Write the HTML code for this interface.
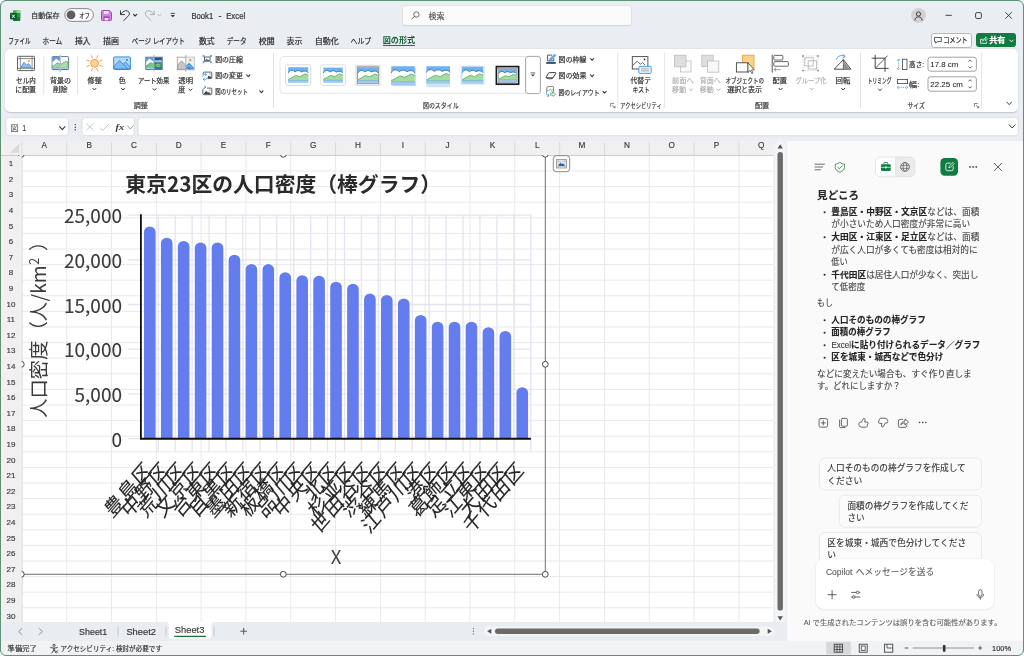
<!DOCTYPE html>
<html lang="ja"><head><meta charset="utf-8"><title>Book1 - Excel</title>
<style>
html,body{margin:0;padding:0}
body{width:1024px;height:656px;position:relative;overflow:hidden;background:#fff;font-family:"Liberation Sans","Noto Sans CJK JP",sans-serif;font-size:8px;color:#242424;line-height:1}
.a{position:absolute;white-space:nowrap}
svg{position:absolute;overflow:visible;will-change:transform}
#win{position:absolute;left:0;top:0;width:1024px;height:656px;border-radius:6px;background:#eaedf1;overflow:hidden}
#winb{position:absolute;left:0;top:0;width:1022px;height:654px;border:1px solid #5d9277;border-radius:6px;pointer-events:none}
#ribbon{left:5.4px;top:49px;width:1013px;height:63px;background:#fff;border-radius:5px;box-shadow:0 0.5px 1.5px rgba(0,0,0,.18)}
.tab{top:36.5px;font-size:7.8px;color:#242424;letter-spacing:-0.3px}
.rl{font-size:7.4px;color:#333;text-align:center;line-height:9.5px;letter-spacing:-0.4px}
.gl{font-size:7.2px;color:#444;letter-spacing:-0.3px}
.dis{color:#b0b0b0}
.sep{width:1px;background:#dcdcdc}
.fbox{background:#fff;border-radius:3px;top:118px;height:18px;box-shadow:0 0 0 .5px #dfe2e6}
#sheet{left:0;top:140px;width:787px;height:482px;background:#fff}
#panel{left:787.4px;top:140.7px;width:237px;height:500px;background:#fafafa}
#tabsbar{left:0;top:622px;width:787px;height:19px;background:#e9ecf0}
#status{left:0;top:641px;width:1024px;height:15px;background:#f1f2f4}
.p{font-size:8.2px;color:#424242;letter-spacing:-0.1px}
.pb{font-weight:700;color:#242424}
.chip{background:#fafafa;border:1px solid #e6e6e6;border-radius:5px;font-size:8.2px;color:#333;line-height:12.5px;padding:3px 7px;white-space:normal;box-sizing:border-box}
</style></head><body>
<div id="win">
<!-- excel icon -->
<svg style="left:10px;top:10px" width="11" height="12" viewBox="0 0 11 12">
<path d="M3 0.3H9.3Q10.3 0.3 10.3 1.3V3.2H3Z" fill="#3fb55a"/>
<path d="M6.6 0.3H9.3Q10.3 0.3 10.3 1.3V3.2H6.6Z" fill="#8edb7c"/>
<path d="M3 3.2H10.3V10Q10.3 11 9.3 11H3Z" fill="#137a3e"/>
<path d="M6.6 3.2H10.3V7H6.6Z" fill="#1e9b52"/>
<rect x="0" y="2.8" width="6.8" height="6.8" rx="1" fill="#0e5c2f"/>
<path d="M2.2 4.7L4.6 7.8M4.6 4.7L2.2 7.8" stroke="#fff" stroke-width="1" fill="none"/>
</svg>
<svg style="left:0;top:0" width="100" height="30" viewBox="0 0 100 30"><rect x="64.8" y="8.6" width="28.6" height="12.7" rx="6.35" fill="#fdfdfd" stroke="#7a7a7a" stroke-width="0.9"/><circle cx="71" cy="14.9" r="4.4" fill="#5e5e5e"/></svg>
<!-- save -->
<svg style="left:101px;top:10px" width="11" height="11" viewBox="0 0 11 11">
<path d="M1.4 0.5H8.5L10.5 2.5V9.4Q10.5 10.5 9.4 10.5H1.4Q0.5 10.5 0.5 9.4V1.4Q0.5 0.5 1.4 0.5Z" fill="#cf86dc" stroke="#a846bc" stroke-width="1"/>
<rect x="2.9" y="1" width="4.6" height="2.9" fill="#fbeefd"/>
<rect x="2.6" y="6.3" width="5.8" height="4" fill="#a846bc"/>
<rect x="3.6" y="8" width="3.8" height="2.3" fill="#fbeefd"/>
</svg>
<!-- undo -->
<svg style="left:0;top:0" width="200" height="30" viewBox="0 0 200 30">
<path d="M120.5 10.9V14.6H124.5" stroke="#333" stroke-width="0.95" fill="none" stroke-linecap="round" stroke-linejoin="round"/>
<path d="M120.8 14.3C122.5 11.6 125 10.2 127.2 10.9C129.5 11.6 130 13.9 128.6 15.7L123.7 20.5" stroke="#333" stroke-width="0.95" fill="none" stroke-linecap="round" stroke-linejoin="round"/>
<path d="M133.5 14.3L135.1 16L136.7 14.3" stroke="#333" stroke-width="1.15" fill="none" stroke-linecap="round" stroke-linejoin="round"/>
<path d="M154.2 10.9V14.6H150.2" stroke="#ababab" stroke-width="0.95" fill="none" stroke-linecap="round" stroke-linejoin="round"/>
<path d="M153.9 14.3C152.2 11.6 149.7 10.2 147.5 10.9C145.2 11.6 144.7 13.9 146.1 15.7L151 20.5" stroke="#ababab" stroke-width="0.95" fill="none" stroke-linecap="round" stroke-linejoin="round"/>
<path d="M157.9 14.3L159.5 16L161.1 14.3" stroke="#bdbdbd" stroke-width="1" fill="none" stroke-linecap="round" stroke-linejoin="round"/>
<path d="M170.7 13.4H174.9" stroke="#3a3a3a" stroke-width="0.9"/><path d="M170.7 14.9H174.9L172.8 17.5Z" fill="#3a3a3a"/>
</svg>
<!-- search -->
<div class="a" style="left:402.5px;top:5.5px;width:228px;height:19.5px;background:#fbfbfb;border-radius:3px;box-shadow:0 0 0 0.6px #d9dcdf,0 1px 1.2px rgba(0,0,0,.13)"></div>
<svg style="left:411px;top:11px" width="9" height="9" viewBox="0 0 9 9"><circle cx="5.4" cy="3.5" r="2.7" stroke="#555" stroke-width="0.85" fill="none"/><path d="M3.4 5.5L0.7 8.2" stroke="#555" stroke-width="0.9" stroke-linecap="round"/></svg>
<!-- avatar -->
<div class="a" style="left:911.2px;top:8px;width:15.2px;height:15.2px;border-radius:8px;background:#d2d2d2"></div>
<svg style="left:914.3px;top:10.5px" width="9" height="10" viewBox="0 0 9 10"><circle cx="4.5" cy="3" r="2.1" stroke="#333" stroke-width="0.9" fill="none"/><path d="M0.9 9.2C1.2 6.6 2.6 5.9 4.5 5.9C6.4 5.9 7.8 6.6 8.1 9.2" stroke="#333" stroke-width="0.9" fill="none" stroke-linecap="round"/></svg>
<!-- window controls -->
<svg style="left:945px;top:12px" width="70" height="8" viewBox="0 0 70 8">
<path d="M0.5 3.3H6.8" stroke="#333" stroke-width="0.9"/>
<rect x="30.6" y="0.6" width="5.8" height="5.9" rx="1.3" stroke="#333" stroke-width="0.9" fill="none"/>
<path d="M60.3 0.2L66.8 6.7M66.8 0.2L60.3 6.7" stroke="#333" stroke-width="0.9"/>
</svg>

<div class="a" style="left:382.9px;top:45.1px;width:32.4px;height:1.25px;background:#1e7145;border-radius:1px"></div>
<!-- comment button -->
<div class="a" style="left:930.8px;top:33px;width:39.4px;height:13.4px;background:#fff;border:0.8px solid #b8b8b8;border-radius:3px"></div>
<svg style="left:934.3px;top:36.5px" width="8" height="7" viewBox="0 0 8 7"><path d="M0.5 0.5H7.3V4.6H3L1.7 6.2V4.6H0.5Z" stroke="#333" stroke-width="0.8" fill="none" stroke-linejoin="round"/></svg>
<!-- share button -->
<div class="a" style="left:976.3px;top:32.8px;width:39.6px;height:14.4px;background:#107c41;border-radius:3px"></div>
<svg style="left:979.5px;top:36px" width="8" height="8" viewBox="0 0 8 8"><path d="M2.8 3.2H0.6V7.3H6.6V5.6" stroke="#fff" stroke-width="0.8" fill="none"/><path d="M2.6 5.4C2.8 3.4 4 2.4 5.6 2.4V0.9L7.6 2.9L5.6 4.9V3.6C4.3 3.6 3.3 4.2 2.6 5.4Z" stroke="#fff" stroke-width="0.7" fill="none" stroke-linejoin="round"/></svg>
<svg style="left:1008.8px;top:38.6px" width="5" height="4" viewBox="0 0 5 4"><path d="M0.6 0.8L2.5 2.8L4.4 0.8" stroke="#fff" stroke-width="0.9" fill="none"/></svg>

<svg width="1024" height="50" viewBox="0 0 1024 50" style="left:0px;top:0px" font-family="Liberation Sans, Noto Sans CJK JP, sans-serif">
<text x="31.10" y="17.63" font-size="7.3" fill="#333" stroke="#333" stroke-width="0.2" textLength="28.50" lengthAdjust="spacingAndGlyphs">自動保存</text>
<text x="79.20" y="17.69" font-size="7.2" fill="#333" stroke="#333" stroke-width="0.2" textLength="10.80" lengthAdjust="spacingAndGlyphs">オフ</text>
<text x="191.40" y="18.75" font-size="8.6" fill="#333" stroke="#333" stroke-width="0.2" textLength="21.80" lengthAdjust="spacingAndGlyphs">Book1</text>
<text x="218.60" y="18.75" font-size="8.6" fill="#333" stroke="#333" stroke-width="0.2" textLength="3.00" lengthAdjust="spacingAndGlyphs">-</text>
<text x="226.20" y="18.75" font-size="8.6" fill="#333" stroke="#333" stroke-width="0.2" textLength="19.00" lengthAdjust="spacingAndGlyphs">Excel</text>
<text x="428.60" y="18.51" font-size="7.8" fill="#5a5a5a" stroke="#5a5a5a" stroke-width="0.2" textLength="16.00" lengthAdjust="spacingAndGlyphs">検索</text>
<text x="8.30" y="43.51" font-size="7.8" fill="#2a2a2a" stroke="#2a2a2a" stroke-width="0.2" textLength="22.20" lengthAdjust="spacingAndGlyphs">ファイル</text>
<text x="42.50" y="43.51" font-size="7.8" fill="#2a2a2a" stroke="#2a2a2a" stroke-width="0.2" textLength="19.70" lengthAdjust="spacingAndGlyphs">ホーム</text>
<text x="74.90" y="43.51" font-size="7.8" fill="#2a2a2a" stroke="#2a2a2a" stroke-width="0.2" textLength="15.50" lengthAdjust="spacingAndGlyphs">挿入</text>
<text x="103.00" y="43.51" font-size="7.8" fill="#2a2a2a" stroke="#2a2a2a" stroke-width="0.2" textLength="15.90" lengthAdjust="spacingAndGlyphs">描画</text>
<text x="131.70" y="43.51" font-size="7.8" fill="#2a2a2a" stroke="#2a2a2a" stroke-width="0.2" textLength="53.20" lengthAdjust="spacingAndGlyphs">ページ レイアウト</text>
<text x="198.90" y="43.51" font-size="7.8" fill="#2a2a2a" stroke="#2a2a2a" stroke-width="0.2" textLength="15.70" lengthAdjust="spacingAndGlyphs">数式</text>
<text x="226.80" y="43.51" font-size="7.8" fill="#2a2a2a" stroke="#2a2a2a" stroke-width="0.2" textLength="19.70" lengthAdjust="spacingAndGlyphs">データ</text>
<text x="258.80" y="43.51" font-size="7.8" fill="#2a2a2a" stroke="#2a2a2a" stroke-width="0.2" textLength="15.80" lengthAdjust="spacingAndGlyphs">校閲</text>
<text x="286.60" y="43.51" font-size="7.8" fill="#2a2a2a" stroke="#2a2a2a" stroke-width="0.2" textLength="15.80" lengthAdjust="spacingAndGlyphs">表示</text>
<text x="314.70" y="43.51" font-size="7.8" fill="#2a2a2a" stroke="#2a2a2a" stroke-width="0.2" textLength="24.10" lengthAdjust="spacingAndGlyphs">自動化</text>
<text x="350.50" y="43.51" font-size="7.8" fill="#2a2a2a" stroke="#2a2a2a" stroke-width="0.2" textLength="20.80" lengthAdjust="spacingAndGlyphs">ヘルプ</text>
<text x="382.70" y="43.27" font-size="7.7" fill="#185c37" font-weight="700" textLength="32.50" lengthAdjust="spacingAndGlyphs">図の形式</text>
<text x="943.50" y="42.64" font-size="7.6" fill="#222" stroke="#222" stroke-width="0.2" textLength="24.10" lengthAdjust="spacingAndGlyphs">コメント</text>
<text x="989.20" y="42.74" font-size="7.9" fill="#fff" font-weight="700" stroke="#fff" stroke-width="0.2" textLength="16.30" lengthAdjust="spacingAndGlyphs">共有</text>
</svg>

<div id="ribbon" class="a">

</div>
<svg width="1024" height="140" viewBox="0 0 1024 140" style="left:0px;top:0px" font-family="Liberation Sans, Noto Sans CJK JP, sans-serif">
<rect x="17.5" y="56.3" width="17" height="14.3" rx="0.8" fill="#fff" stroke="#575757" stroke-width="0.95"/>
<path d="M20.3 56.3V70.6M32.1 56.3V70.6M17.5 58.6H34.5M17.5 68.4H34.5" stroke="#6a6a6a" stroke-width="0.75" fill="none"/>
<path d="M21 67.4L24 62.3L26.6 65.2L28.6 63.6L31.3 67.4Z" fill="#8cc6f7" stroke="#2f7fd6" stroke-width="0.75" stroke-linejoin="round"/>
<rect x="27.9" y="60.2" width="1.9" height="1.5" fill="#f28c28"/>
<text x="16.10" y="83.06" font-size="7.4" fill="#333" stroke="#333" stroke-width="0.22" textLength="19.70" lengthAdjust="spacingAndGlyphs">セル内</text>
<text x="15.30" y="91.86" font-size="7.4" fill="#333" stroke="#333" stroke-width="0.22" textLength="20.50" lengthAdjust="spacingAndGlyphs">に配置</text>
<path d="M43.80 56.00V94.50" stroke="#e3e3e3" stroke-width="1"/>
<rect x="52.1" y="56.6" width="16.5" height="13" rx="0.8" fill="#fff" stroke="#5d7288" stroke-width="0.95"/>
<rect x="52.6" y="57.1" width="7.6" height="12" fill="#4b97e4"/>
<path d="M52.6 62.2L56 58.4L60.2 61.6V66H52.6Z" fill="#fff"/>
<path d="M52.6 66.4L57.2 63L60.2 63.8V67.6H52.6Z" fill="#9ad79a" stroke="#3d9a4f" stroke-width="0.6"/>
<path d="M60.4 64.6L65.6 61.4L68.1 62V67.6H60.4Z" fill="#a9dfa6" stroke="#3d9a4f" stroke-width="0.6"/>
<path d="M52.6 67.5H68.1V69.1H52.6Z" fill="#b9dcf5"/>
<path d="M52.6 69.3H68.1" stroke="#2f6fb0" stroke-width="0.7"/>
<path d="M60.3 54.8V72" stroke="#b9c2c9" stroke-width="1.4"/>
<text x="49.90" y="83.06" font-size="7.4" fill="#333" stroke="#333" stroke-width="0.22" textLength="21.20" lengthAdjust="spacingAndGlyphs">背景の</text>
<text x="53.00" y="91.86" font-size="7.4" fill="#333" stroke="#333" stroke-width="0.22" textLength="14.70" lengthAdjust="spacingAndGlyphs">削除</text>
<path d="M77.70 56.00V94.50" stroke="#e3e3e3" stroke-width="1"/>
<path d="M99.87 65.48L102.27 66.48M96.78 68.57L97.78 70.97M92.42 68.57L91.42 70.97M89.33 65.48L86.93 66.48M89.33 61.12L86.93 60.12M92.42 58.03L91.42 55.63M96.78 58.03L97.78 55.63M99.87 61.12L102.27 60.12" stroke="#f39a4a" stroke-width="1" stroke-linecap="round"/>
<circle cx="94.6" cy="63.3" r="3.9" fill="#fcd68f" stroke="#f0913c" stroke-width="0.9"/>
<text x="87.50" y="83.06" font-size="7.4" fill="#333" stroke="#333" stroke-width="0.22" textLength="14.40" lengthAdjust="spacingAndGlyphs">修整</text>
<path d="M92.90 88.38L94.40 90.03L95.90 88.38" stroke="#333" stroke-width="1" fill="none" stroke-linecap="round" stroke-linejoin="round"/>
<rect x="113.6" y="56.9" width="17" height="12.6" rx="1" fill="#b5d9fa" stroke="#3a8be0" stroke-width="0.95"/>
<path d="M114.1 66.2L119.6 60.6L123.2 64.2L125.6 62.2L130.1 66.6V69H114.1Z" fill="#7ebcf4" stroke="#2f7fd6" stroke-width="0.8" stroke-linejoin="round"/>
<path d="M123.2 64.2L127.6 68.8" stroke="#2f7fd6" stroke-width="0.7"/>
<circle cx="126.9" cy="59.9" r="0.95" fill="#2b6fc0"/>
<text x="118.70" y="83.06" font-size="7.4" fill="#333" stroke="#333" stroke-width="0.22" textLength="7.10" lengthAdjust="spacingAndGlyphs">色</text>
<path d="M121.50 88.38L123.00 90.03L124.50 88.38" stroke="#333" stroke-width="1" fill="none" stroke-linecap="round" stroke-linejoin="round"/>
<rect x="145.8" y="57.2" width="16.4" height="12.2" fill="#fff" stroke="#4d6178" stroke-width="0.9"/>
<rect x="146.2" y="57.6" width="7.4" height="11.4" fill="#4b97e4"/>
<path d="M146.2 62L149.4 58.6L153.6 61.4V65.5H146.2Z" fill="#fff"/>
<path d="M146.2 66L150.4 62.8L153.6 63.8V67.4H146.2Z" fill="#7cc87a" stroke="#3d9a4f" stroke-width="0.6"/>
<rect x="154.2" y="57.6" width="7.6" height="11.4" fill="#1f4f8f"/>
<path d="M154.2 61.4C155.4 59.6 157 59.6 158 60.6C159.2 59.4 160.6 59.6 161.8 60.6V62.4H154.2Z" fill="#9fc3ea"/>
<path d="M154.2 64.8L158.4 62.2L161.8 63V67.4H154.2Z" fill="#3fa45a"/>
<path d="M156 65.4C157 64.2 159 64.2 160 65.2M156.6 66.6H160" stroke="#c9efd0" stroke-width="0.55" fill="none"/>
<path d="M146.2 67.4H153.6V69H146.2Z" fill="#a9d3f3"/>
<path d="M154.2 67.4H161.8V69H154.2Z" fill="#2f6fb6"/>
<path d="M153.9 55V71.5" stroke="#a9b1b8" stroke-width="1.1"/>
<text x="138.00" y="83.06" font-size="7.4" fill="#333" stroke="#333" stroke-width="0.22" textLength="31.30" lengthAdjust="spacingAndGlyphs">アート効果</text>
<path d="M153.10 88.67L154.60 90.33L156.10 88.67" stroke="#333" stroke-width="1" fill="none" stroke-linecap="round" stroke-linejoin="round"/>
<rect x="177.3" y="57.2" width="16.8" height="12.6" fill="#fff" stroke="#999" stroke-width="0.8"/>
<path d="M177.7 65L181.5 60.8L185.5 64.8V69.4H177.7Z" fill="#c6c6c6" stroke="#8e8e8e" stroke-width="0.7"/>
<rect x="186.2" y="57.6" width="7.5" height="11.8" fill="#e8f2fc"/>
<path d="M186.2 65.5L189 62.8L193.7 67.5V69.4H186.2Z" fill="#3f8fe0"/>
<path d="M187 67.2L189 65.2L192 68.2" stroke="#bfe0fb" stroke-width="0.7" fill="none"/>
<circle cx="190.3" cy="60.2" r="1.1" fill="#f28c28"/>
<path d="M185.8 55V71.8" stroke="#b0b0b0" stroke-width="1"/>
<text x="178.30" y="83.06" font-size="7.4" fill="#333" stroke="#333" stroke-width="0.22" textLength="14.70" lengthAdjust="spacingAndGlyphs">透明</text>
<text x="178.30" y="92.36" font-size="7.4" fill="#333" stroke="#333" stroke-width="0.22" textLength="7.10" lengthAdjust="spacingAndGlyphs">度</text>
<path d="M188.90 88.97L190.40 90.62L191.90 88.97" stroke="#333" stroke-width="1" fill="none" stroke-linecap="round" stroke-linejoin="round"/>
<rect x="204.4" y="57" width="5.6" height="4.2" fill="#fff" stroke="#444" stroke-width="0.8"/>
<path d="M204.8 60.8L206.6 58.8L208 60.2L208.8 59.6L209.6 60.8Z" fill="#444"/>
<path d="M202.7 55.1L204 56.4M204 55.3V56.4H202.9M211.9 55.1L210.6 56.4M210.6 55.3V56.4H211.7M202.7 63.1L204 61.8M204 62.9V61.8H202.9M211.9 63.1L210.6 61.8M210.6 62.9V61.8H211.7" stroke="#3a8be0" stroke-width="0.75" fill="none" stroke-linecap="round" stroke-linejoin="round"/>
<text x="215.20" y="62.26" font-size="7.4" fill="#333" stroke="#333" stroke-width="0.22" textLength="27.60" lengthAdjust="spacingAndGlyphs">図の圧縮</text>
<rect x="203.2" y="72.1" width="8.6" height="6.5" rx="1" fill="#fff" stroke="#444" stroke-width="0.85"/>
<path d="M206.6 78.2L208.8 75.4L210 76.8L210.6 76.3L211.4 77.4V78.2Z" fill="#444"/>
<circle cx="210" cy="74" r="0.6" fill="#444"/>
<circle cx="204.8" cy="77" r="3.1" fill="#fff"/>
<path d="M202.4 76.2C202.9 74.6 204.6 73.8 206.2 74.5M207.2 77.8C206.7 79.4 205 80.2 203.4 79.5" stroke="#3a8be0" stroke-width="0.75" fill="none" stroke-linecap="round" stroke-linejoin="round"/>
<path d="M205.2 73.4L206.5 74.6L205.1 75.7M204.4 80.6L203.1 79.4L204.5 78.3" stroke="#3a8be0" stroke-width="0.75" fill="none" stroke-linecap="round" stroke-linejoin="round"/>
<text x="215.20" y="78.36" font-size="7.4" fill="#333" stroke="#333" stroke-width="0.22" textLength="27.60" lengthAdjust="spacingAndGlyphs">図の変更</text>
<path d="M246.70 74.82L248.30 76.58L249.90 74.82" stroke="#333" stroke-width="1.05" fill="none" stroke-linecap="round" stroke-linejoin="round"/>
<rect x="202.8" y="88.1" width="9" height="6.6" rx="1" fill="#fff" stroke="#444" stroke-width="0.85"/>
<path d="M203.4 94.2L206.2 90.8L208 92.8L209 92L211.2 94.2Z" fill="#444"/>
<circle cx="209.8" cy="90" r="0.6" fill="#444"/>
<rect x="201.8" y="85.6" width="5.2" height="4.4" fill="#fff"/>
<path d="M203 90.4C202.6 88.6 203.6 87.2 205.6 87.2" stroke="#3a8be0" stroke-width="0.75" fill="none" stroke-linecap="round" stroke-linejoin="round"/>
<path d="M204.6 85.9L206 87.2L204.6 88.5" stroke="#3a8be0" stroke-width="0.75" fill="none" stroke-linecap="round" stroke-linejoin="round"/>
<text x="215.20" y="94.16" font-size="7.4" fill="#333" stroke="#333" stroke-width="0.22" textLength="32.70" lengthAdjust="spacingAndGlyphs">図のリセット</text>
<path d="M259.80 90.82L261.40 92.58L263.00 90.82" stroke="#333" stroke-width="1.05" fill="none" stroke-linecap="round" stroke-linejoin="round"/>
<text x="133.70" y="108.19" font-size="7.2" fill="#444" stroke="#444" stroke-width="0.22" textLength="14.20" lengthAdjust="spacingAndGlyphs">調整</text>
<path d="M273.50 52.50V108.00" stroke="#e3e3e3" stroke-width="1"/>

<path d="M525.5 56.5H283.5Q280 56.5 280 60V89.8Q280 93.3 283.5 93.3H525.5" fill="#fff" stroke="#e2e2e2" stroke-width="0.9"/>
<rect x="285.6" y="64.8" width="25.2" height="20.6" rx="1.8" fill="#fff" stroke="#d0d0d0" stroke-width="0.8"/>
<rect x="288.20" y="67.20" width="20.00" height="15.80" fill="#6fb2f0"/><path d="M288.20 72.89C289.40 69.73 293.00 69.41 295.00 71.94C297.00 70.04 299.80 70.04 301.40 71.94C303.80 70.36 307.00 70.68 308.20 72.89V80.63H288.20Z" fill="#fff"/><path d="M288.20 72.89C289.40 69.73 293.00 69.41 295.00 71.94C297.00 70.04 299.80 70.04 301.40 71.94C303.80 70.36 307.00 70.68 308.20 72.89" fill="none" stroke="#1f5fb0" stroke-width="0.8"/><path d="M288.20 79.52L295.80 75.42L299.80 76.68L305.00 73.84L308.20 75.10V80.79H288.20Z" fill="#a6dca2"/><path d="M288.20 79.52L295.80 75.42L299.80 76.68L305.00 73.84L308.20 75.10" fill="none" stroke="#3d9a4f" stroke-width="0.65"/><rect x="288.20" y="80.47" width="20.00" height="2.53" fill="#a5cdf1"/><path d="M288.20 80.47H308.20" stroke="#5f9fd8" stroke-width="0.5"/>
<rect x="320.6" y="64.8" width="25" height="20.6" rx="1.8" fill="#fff" stroke="#d9d9d9" stroke-width="0.8"/>
<rect x="323.40" y="67.60" width="19.40" height="15.00" fill="#6fb2f0"/><path d="M323.40 73.00C324.56 70.00 328.06 69.70 330.00 72.10C331.94 70.30 334.65 70.30 336.20 72.10C338.53 70.60 341.64 70.90 342.80 73.00V80.35H323.40Z" fill="#fff"/><path d="M323.40 73.00C324.56 70.00 328.06 69.70 330.00 72.10C331.94 70.30 334.65 70.30 336.20 72.10C338.53 70.60 341.64 70.90 342.80 73.00" fill="none" stroke="#1f5fb0" stroke-width="0.8"/><path d="M323.40 79.30L330.77 75.40L334.65 76.60L339.70 73.90L342.80 75.10V80.50H323.40Z" fill="#a6dca2"/><path d="M323.40 79.30L330.77 75.40L334.65 76.60L339.70 73.90L342.80 75.10" fill="none" stroke="#3d9a4f" stroke-width="0.65"/><rect x="323.40" y="80.20" width="19.40" height="2.40" fill="#a5cdf1"/><path d="M323.40 80.20H342.80" stroke="#5f9fd8" stroke-width="0.5"/>
<rect x="356" y="65.2" width="24" height="20" fill="#f1f1f1" stroke="#d2d2d2" stroke-width="0.8"/>
<rect x="357.6" y="66.8" width="20.8" height="16.8" fill="none" stroke="#8a8a8a" stroke-width="0.8"/>
<rect x="358.00" y="67.20" width="20.00" height="16.00" fill="#6fb2f0"/><path d="M358.00 72.96C359.20 69.76 362.80 69.44 364.80 72.00C366.80 70.08 369.60 70.08 371.20 72.00C373.60 70.40 376.80 70.72 378.00 72.96V80.80H358.00Z" fill="#fff"/><path d="M358.00 72.96C359.20 69.76 362.80 69.44 364.80 72.00C366.80 70.08 369.60 70.08 371.20 72.00C373.60 70.40 376.80 70.72 378.00 72.96" fill="none" stroke="#1f5fb0" stroke-width="0.8"/><path d="M358.00 79.68L365.60 75.52L369.60 76.80L374.80 73.92L378.00 75.20V80.96H358.00Z" fill="#a6dca2"/><path d="M358.00 79.68L365.60 75.52L369.60 76.80L374.80 73.92L378.00 75.20" fill="none" stroke="#3d9a4f" stroke-width="0.65"/><rect x="358.00" y="80.64" width="20.00" height="2.56" fill="#a5cdf1"/><path d="M358.00 80.64H378.00" stroke="#5f9fd8" stroke-width="0.5"/>
<rect x="392.2" y="67.6" width="23.6" height="18.4" fill="#c8c8c8" opacity="0.8"/>
<rect x="391.20" y="66.20" width="23.60" height="18.60" fill="#6fb2f0"/><path d="M391.20 72.90C392.62 69.18 396.86 68.80 399.22 71.78C401.58 69.55 404.89 69.55 406.78 71.78C409.61 69.92 413.38 70.29 414.80 72.90V82.01H391.20Z" fill="#fff"/><path d="M391.20 72.90C392.62 69.18 396.86 68.80 399.22 71.78C401.58 69.55 404.89 69.55 406.78 71.78C409.61 69.92 413.38 70.29 414.80 72.90" fill="none" stroke="#1f5fb0" stroke-width="0.8"/><path d="M391.20 80.71L400.17 75.87L404.89 77.36L411.02 74.01L414.80 75.50V82.20H391.20Z" fill="#a6dca2"/><path d="M391.20 80.71L400.17 75.87L404.89 77.36L411.02 74.01L414.80 75.50" fill="none" stroke="#3d9a4f" stroke-width="0.65"/><rect x="391.20" y="81.82" width="23.60" height="2.98" fill="#a5cdf1"/><path d="M391.20 81.82H414.80" stroke="#5f9fd8" stroke-width="0.5"/>
<rect x="426.40" y="66.20" width="23.60" height="17.40" fill="#6fb2f0"/><path d="M426.40 72.46C427.82 68.98 432.06 68.64 434.42 71.42C436.78 69.33 440.09 69.33 441.98 71.42C444.81 69.68 448.58 70.03 450.00 72.46V80.99H426.40Z" fill="#fff"/><path d="M426.40 72.46C427.82 68.98 432.06 68.64 434.42 71.42C436.78 69.33 440.09 69.33 441.98 71.42C444.81 69.68 448.58 70.03 450.00 72.46" fill="none" stroke="#1f5fb0" stroke-width="0.8"/><path d="M426.40 79.77L435.37 75.25L440.09 76.64L446.22 73.51L450.00 74.90V81.16H426.40Z" fill="#a6dca2"/><path d="M426.40 79.77L435.37 75.25L440.09 76.64L446.22 73.51L450.00 74.90" fill="none" stroke="#3d9a4f" stroke-width="0.65"/><rect x="426.40" y="80.82" width="23.60" height="2.78" fill="#a5cdf1"/><path d="M426.40 80.82H450.00" stroke="#5f9fd8" stroke-width="0.5"/>
<rect x="426.4" y="83.6" width="23.6" height="3.6" fill="#b9d8f4" opacity="0.7"/>
<rect x="460.6" y="65.6" width="24" height="19" fill="#cfe4f8"/>
<rect x="462.20" y="66.80" width="20.80" height="16.40" fill="#6fb2f0"/><path d="M462.20 72.70C463.45 69.42 467.19 69.10 469.27 71.72C471.35 69.75 474.26 69.75 475.93 71.72C478.42 70.08 481.75 70.41 483.00 72.70V80.74H462.20Z" fill="#fff"/><path d="M462.20 72.70C463.45 69.42 467.19 69.10 469.27 71.72C471.35 69.75 474.26 69.75 475.93 71.72C478.42 70.08 481.75 70.41 483.00 72.70" fill="none" stroke="#1f5fb0" stroke-width="0.8"/><path d="M462.20 79.59L470.10 75.33L474.26 76.64L479.67 73.69L483.00 75.00V80.90H462.20Z" fill="#a6dca2"/><path d="M462.20 79.59L470.10 75.33L474.26 76.64L479.67 73.69L483.00 75.00" fill="none" stroke="#3d9a4f" stroke-width="0.65"/><rect x="462.20" y="80.58" width="20.80" height="2.62" fill="#a5cdf1"/><path d="M462.20 80.58H483.00" stroke="#5f9fd8" stroke-width="0.5"/>
<rect x="496.4" y="66.6" width="22.2" height="17.6" fill="#fff" stroke="#1a1a1a" stroke-width="1.7"/>
<rect x="498.4" y="68.5" width="18.2" height="13.8" fill="none" stroke="#555" stroke-width="0.5"/>
<rect x="498.80" y="68.90" width="17.40" height="13.00" fill="#6fb2f0"/><path d="M498.80 73.58C499.84 70.98 502.98 70.72 504.72 72.80C506.46 71.24 508.89 71.24 510.28 72.80C512.37 71.50 515.16 71.76 516.20 73.58V79.95H498.80Z" fill="#fff"/><path d="M498.80 73.58C499.84 70.98 502.98 70.72 504.72 72.80C506.46 71.24 508.89 71.24 510.28 72.80C512.37 71.50 515.16 71.76 516.20 73.58" fill="none" stroke="#1f5fb0" stroke-width="0.8"/><path d="M498.80 79.04L505.41 75.66L508.89 76.70L513.42 74.36L516.20 75.40V80.08H498.80Z" fill="#a6dca2"/><path d="M498.80 79.04L505.41 75.66L508.89 76.70L513.42 74.36L516.20 75.40" fill="none" stroke="#3d9a4f" stroke-width="0.65"/><rect x="498.80" y="79.82" width="17.40" height="2.08" fill="#a5cdf1"/><path d="M498.80 79.82H516.20" stroke="#5f9fd8" stroke-width="0.5"/>
<rect x="525.6" y="56.4" width="14.8" height="37.2" rx="2.6" fill="#fff" stroke="#9a9a9a" stroke-width="0.9"/>
<path d="M530.6 72.9H535.2" stroke="#444" stroke-width="0.8"/><path d="M530.8 74.4L532.9 76.6L535 74.4Z" fill="#444"/>
<path d="M552 55.1H547.6V60.9H553.8V58.6" fill="none" stroke="#444" stroke-width="0.9"/>
<path d="M549.6 60.3L550.3 58.2L554.6 54.2L555.9 55.5L551.7 59.7Z" fill="#6db3f2" stroke="#2f7fd6" stroke-width="0.7" stroke-linejoin="round"/>
<rect x="546.2" y="62.1" width="9.6" height="1.7" fill="#17406d"/>
<text x="558.50" y="61.96" font-size="7.4" fill="#333" stroke="#333" stroke-width="0.22" textLength="27.90" lengthAdjust="spacingAndGlyphs">図の枠線</text>
<path d="M590.50 58.52L592.10 60.28L593.70 58.52" stroke="#333" stroke-width="1.05" fill="none" stroke-linecap="round" stroke-linejoin="round"/>
<path d="M549.4 72.6H555.4Q556.2 72.6 555.8 73.4L553.4 77.2Q553 77.8 552.2 77.8H546.8Q545.8 77.8 546.4 76.8L548.4 73.2Q548.8 72.6 549.4 72.6Z" fill="#fff" stroke="#333" stroke-width="0.95" stroke-linejoin="round"/>
<path d="M546.2 77.2C546.4 79.2 552.4 79.4 553.4 77.4" stroke="#333" stroke-width="0.95" fill="none"/>
<text x="558.50" y="78.16" font-size="7.4" fill="#333" stroke="#333" stroke-width="0.22" textLength="27.90" lengthAdjust="spacingAndGlyphs">図の効果</text>
<path d="M590.50 74.82L592.10 76.58L593.70 74.82" stroke="#333" stroke-width="1.05" fill="none" stroke-linecap="round" stroke-linejoin="round"/>
<rect x="546.9" y="86.6" width="6.6" height="5.4" rx="0.6" fill="#fff" stroke="#666" stroke-width="0.8"/>
<path d="M548 91.4L550.2 88.8L551.6 90.4L552.6 89.6" stroke="#666" stroke-width="0.6" fill="none"/>
<circle cx="549.4" cy="93.4" r="2.6" fill="#fff"/>
<path d="M547.2 90.6C545.6 92.4 546.2 95 548.6 95.8" stroke="#3a8be0" stroke-width="0.85" fill="none" stroke-linecap="round"/>
<path d="M547.4 96.4L549 95.9L548.3 94.4" stroke="#3a8be0" stroke-width="0.75" fill="none" stroke-linecap="round" stroke-linejoin="round"/>
<path d="M550.6 93.2H553.2V92L555.8 94.2L553.2 96.4V95.2H550.6Z" fill="#fff" stroke="#3d9a4f" stroke-width="0.7" stroke-linejoin="round"/>
<text x="558.50" y="94.66" font-size="7.4" fill="#333" stroke="#333" stroke-width="0.22" textLength="41.10" lengthAdjust="spacingAndGlyphs">図のレイアウト</text>
<path d="M602.90 91.32L604.50 93.08L606.10 91.32" stroke="#333" stroke-width="1.05" fill="none" stroke-linecap="round" stroke-linejoin="round"/>
<text x="423.00" y="108.19" font-size="7.2" fill="#444" stroke="#444" stroke-width="0.22" textLength="35.60" lengthAdjust="spacingAndGlyphs">図のスタイル</text>
<path d="M610.70 106.80V103.40H614.10" stroke="#555" stroke-width="0.7" fill="none"/><path d="M612.30 105.00L614.90 107.60M613.20 107.70H615.00V105.90" stroke="#555" stroke-width="0.7" fill="none"/>
<path d="M617.80 52.50V108.00" stroke="#e3e3e3" stroke-width="1"/>
<rect x="632.3" y="56.6" width="15.6" height="12.4" fill="#fff" stroke="#444" stroke-width="0.9"/>
<path d="M632.7 65.4L637.2 61.2L640.4 64.2L642.4 62.6L645 65" stroke="#444" stroke-width="0.8" fill="none"/>
<circle cx="644.6" cy="59.4" r="0.9" fill="#333"/>
<rect x="638.8" y="66.4" width="12.4" height="7" rx="1" fill="#eaf4fd" stroke="#3f8fe0" stroke-width="0.9"/>
<path d="M641 68.9H649M641 70.9H649" stroke="#888" stroke-width="0.7"/>
<text x="630.50" y="83.46" font-size="7.4" fill="#333" stroke="#333" stroke-width="0.22" textLength="20.50" lengthAdjust="spacingAndGlyphs">代替テ</text>
<text x="632.50" y="92.46" font-size="7.4" fill="#333" stroke="#333" stroke-width="0.22" textLength="17.50" lengthAdjust="spacingAndGlyphs">キスト</text>
<text x="620.20" y="108.19" font-size="7.2" fill="#444" stroke="#444" stroke-width="0.22" textLength="41.60" lengthAdjust="spacingAndGlyphs">アクセシビリティ</text>
<path d="M664.70 52.50V108.00" stroke="#e3e3e3" stroke-width="1"/>
<rect x="680.6" y="61" width="10.4" height="11" fill="#fafafa" stroke="#bdbdbd" stroke-width="0.8"/>
<rect x="674.4" y="55.2" width="11.6" height="11.6" fill="#dedede" stroke="#bdbdbd" stroke-width="0.8"/>
<text x="672.10" y="83.06" font-size="7.4" fill="#b2b2b2" stroke="#b2b2b2" stroke-width="0.22" textLength="21.50" lengthAdjust="spacingAndGlyphs">前面へ</text>
<text x="672.10" y="92.26" font-size="7.4" fill="#b2b2b2" stroke="#b2b2b2" stroke-width="0.22" textLength="14.10" lengthAdjust="spacingAndGlyphs">移動</text>
<path d="M689.50 88.97L691.00 90.62L692.50 88.97" stroke="#b2b2b2" stroke-width="1" fill="none" stroke-linecap="round" stroke-linejoin="round"/>
<rect x="701.8" y="55.2" width="11.4" height="11.4" fill="#dedede" stroke="#bdbdbd" stroke-width="0.8"/>
<rect x="707.6" y="61" width="11.2" height="11.2" fill="#f7f7f7" stroke="#bdbdbd" stroke-width="0.8"/>
<text x="699.80" y="83.06" font-size="7.4" fill="#b2b2b2" stroke="#b2b2b2" stroke-width="0.22" textLength="21.10" lengthAdjust="spacingAndGlyphs">背面へ</text>
<text x="699.80" y="92.26" font-size="7.4" fill="#b2b2b2" stroke="#b2b2b2" stroke-width="0.22" textLength="14.00" lengthAdjust="spacingAndGlyphs">移動</text>
<path d="M717.10 88.97L718.60 90.62L720.10 88.97" stroke="#b2b2b2" stroke-width="1" fill="none" stroke-linecap="round" stroke-linejoin="round"/>
<rect x="742.6" y="55.2" width="11.4" height="13" fill="#fbd28a" stroke="#f0a030" stroke-width="0.9"/>
<rect x="736.4" y="62.8" width="11.6" height="9.2" fill="#fff" stroke="#444" stroke-width="0.9"/>
<path d="M748 63V72.4L750.2 70.4L751.8 73.6L753 73L751.5 69.9H754.4Z" fill="#fff" stroke="#333" stroke-width="0.7" stroke-linejoin="round"/>
<text x="725.60" y="83.06" font-size="7.4" fill="#333" stroke="#333" stroke-width="0.22" textLength="38.30" lengthAdjust="spacingAndGlyphs">オブジェクトの</text>
<text x="727.20" y="92.26" font-size="7.4" fill="#333" stroke="#333" stroke-width="0.22" textLength="34.80" lengthAdjust="spacingAndGlyphs">選択と表示</text>
<path d="M772.2 54.6V72.6" stroke="#444" stroke-width="0.9"/>
<rect x="773.8" y="55.4" width="9" height="4.6" rx="0.8" fill="#fff" stroke="#444" stroke-width="0.8"/>
<rect x="773.8" y="61.6" width="14.6" height="4.6" rx="0.8" fill="#fff" stroke="#444" stroke-width="0.8"/>
<path d="M780.6 69.6H774.4M776.2 67.8L774.2 69.6L776.2 71.4" stroke="#3f8fe0" stroke-width="0.8" fill="none"/>
<text x="772.50" y="83.06" font-size="7.4" fill="#333" stroke="#333" stroke-width="0.22" textLength="14.30" lengthAdjust="spacingAndGlyphs">配置</text>
<path d="M779.00 88.38L780.50 90.03L782.00 88.38" stroke="#333" stroke-width="1" fill="none" stroke-linecap="round" stroke-linejoin="round"/>
<rect x="803" y="56" width="15" height="14.6" fill="none" stroke="#c4c4c4" stroke-width="0.7" stroke-dasharray="1.4 1.2"/>
<rect x="804.8" y="57.8" width="8.4" height="8.2" fill="#fff" stroke="#b5b5b5" stroke-width="0.9"/>
<rect x="808.2" y="60.8" width="8.4" height="8.2" fill="none" stroke="#b5b5b5" stroke-width="0.9"/>
<rect x="802.20" y="55.20" width="1.6" height="1.6" fill="#8a8a8a"/>
<rect x="817.20" y="55.20" width="1.6" height="1.6" fill="#8a8a8a"/>
<rect x="802.20" y="69.80" width="1.6" height="1.6" fill="#8a8a8a"/>
<rect x="817.20" y="69.80" width="1.6" height="1.6" fill="#8a8a8a"/>
<text x="795.50" y="83.06" font-size="7.4" fill="#b2b2b2" stroke="#b2b2b2" stroke-width="0.22" textLength="31.00" lengthAdjust="spacingAndGlyphs">グループ化</text>
<path d="M810.20 88.38L811.70 90.03L813.20 88.38" stroke="#b2b2b2" stroke-width="1" fill="none" stroke-linecap="round" stroke-linejoin="round"/>
<path d="M834.2 69.2H850.8L843.4 59.6Z" fill="#fff" stroke="#333" stroke-width="0.9" stroke-linejoin="round"/>
<path d="M843.4 59.6V69.2" stroke="#333" stroke-width="0.9"/>
<path d="M843.4 60.8L850 69.2H843.4Z" fill="#8f8f8f"/>
<path d="M836.2 59.6C837 56.4 840.6 54.6 844.4 56.2" stroke="#3f8fe0" stroke-width="0.9" fill="none"/><path d="M842.6 54L845.2 56.4L842.4 58.4" stroke="#3f8fe0" stroke-width="0.9" fill="none"/>
<text x="835.50" y="83.06" font-size="7.4" fill="#333" stroke="#333" stroke-width="0.22" textLength="14.80" lengthAdjust="spacingAndGlyphs">回転</text>
<path d="M841.60 88.38L843.10 90.03L844.60 88.38" stroke="#333" stroke-width="1" fill="none" stroke-linecap="round" stroke-linejoin="round"/>
<text x="754.90" y="108.19" font-size="7.2" fill="#444" stroke="#444" stroke-width="0.22" textLength="14.30" lengthAdjust="spacingAndGlyphs">配置</text>
<path d="M860.50 52.50V108.00" stroke="#e3e3e3" stroke-width="1"/>
<path d="M875.2 54.8V68.4H888.6M871.6 58.2H885V71.8" stroke="#333" stroke-width="0.9" fill="none"/>
<path d="M875.6 68L887.6 55.6" stroke="#333" stroke-width="0.8"/>
<text x="867.70" y="83.06" font-size="7.4" fill="#333" stroke="#333" stroke-width="0.22" textLength="23.80" lengthAdjust="spacingAndGlyphs">トリミング</text>
<path d="M878.50 88.97L880.00 90.62L881.50 88.97" stroke="#333" stroke-width="1" fill="none" stroke-linecap="round" stroke-linejoin="round"/>
<rect x="902.6" y="59.2" width="4.4" height="10.4" fill="#fff" stroke="#444" stroke-width="0.8"/>
<path d="M898.6 60.2V68.6" stroke="#3f8fe0" stroke-width="0.8" stroke-dasharray="1.2 1"/><path d="M897.2 60.6L898.6 59L900 60.6M897.2 68.2L898.6 69.8L900 68.2" stroke="#3f8fe0" stroke-width="0.8" fill="none"/>
<text x="909.10" y="66.86" font-size="7.4" fill="#333" stroke="#333" stroke-width="0.22" textLength="15.00" lengthAdjust="spacingAndGlyphs">高さ:</text>
<rect x="928" y="57.2" width="48.4" height="14" rx="2.4" fill="#fff" stroke="#8c8c8c" stroke-width="0.8"/>
<text x="930.30" y="67.10" font-size="7.9" fill="#222" stroke="#222" stroke-width="0.05" textLength="27.90" lengthAdjust="spacingAndGlyphs">17.8 cm</text>
<path d="M968.80 61.32L970.10 59.88L971.40 61.32" stroke="#444" stroke-width="0.8" fill="none" stroke-linecap="round" stroke-linejoin="round"/>
<path d="M968.80 66.69L970.10 68.12L971.40 66.69" stroke="#444" stroke-width="0.8" fill="none" stroke-linecap="round" stroke-linejoin="round"/>
<rect x="897.4" y="79.4" width="10.2" height="4.2" fill="#fff" stroke="#444" stroke-width="0.8"/>
<path d="M898.4 87.4H906.6" stroke="#3f8fe0" stroke-width="0.8" stroke-dasharray="1.2 1"/><path d="M898.8 86L897.2 87.4L898.8 88.8M906.2 86L907.8 87.4L906.2 88.8" stroke="#3f8fe0" stroke-width="0.8" fill="none"/>
<text x="909.10" y="86.86" font-size="7.4" fill="#333" stroke="#333" stroke-width="0.22" textLength="10.30" lengthAdjust="spacingAndGlyphs">幅:</text>
<rect x="928" y="76.8" width="48.4" height="14.4" rx="2.4" fill="#fff" stroke="#8c8c8c" stroke-width="0.8"/>
<text x="930.30" y="87.00" font-size="7.9" fill="#222" stroke="#222" stroke-width="0.05" textLength="32.70" lengthAdjust="spacingAndGlyphs">22.25 cm</text>
<path d="M968.80 81.12L970.10 79.69L971.40 81.12" stroke="#444" stroke-width="0.8" fill="none" stroke-linecap="round" stroke-linejoin="round"/>
<path d="M968.80 86.69L970.10 88.12L971.40 86.69" stroke="#444" stroke-width="0.8" fill="none" stroke-linecap="round" stroke-linejoin="round"/>
<text x="907.50" y="107.89" font-size="7.2" fill="#444" stroke="#444" stroke-width="0.22" textLength="17.40" lengthAdjust="spacingAndGlyphs">サイズ</text>
<path d="M974.40 106.90V103.50H977.80" stroke="#555" stroke-width="0.7" fill="none"/><path d="M976.00 105.10L978.60 107.70M976.90 107.80H978.70V106.00" stroke="#555" stroke-width="0.7" fill="none"/>
<path d="M981.60 52.50V108.00" stroke="#e3e3e3" stroke-width="1"/>
<path d="M1006.90 102.14L1009.20 104.67L1011.50 102.14" stroke="#333" stroke-width="0.95" fill="none" stroke-linecap="round" stroke-linejoin="round"/>

</svg>
<svg width="1024" height="30" viewBox="0 112 1024 30" style="left:0px;top:112px" font-family="Liberation Sans, Noto Sans CJK JP, sans-serif">
<rect x="6.00" y="117.60" width="62.40" height="18.10" rx="3" fill="#fff" stroke="#d4d8dd" stroke-width="0.8"/>
<rect x="82.00" y="117.60" width="52.40" height="18.10" rx="3" fill="#fff" stroke="#d4d8dd" stroke-width="0.8"/>
<rect x="138.00" y="117.60" width="880.30" height="18.10" rx="3" fill="#fff" stroke="#d4d8dd" stroke-width="0.8"/>
<text x="10.60" y="130.62" font-size="8.4" fill="#6a6a6a" stroke="#6a6a6a" stroke-width="0.15" textLength="8.20" lengthAdjust="spacingAndGlyphs">図</text>
<text x="22.40" y="130.75" font-size="8.6" fill="#333" stroke="#333" stroke-width="0.15" textLength="3.40" lengthAdjust="spacingAndGlyphs">1</text>
<path d="M59.60 126.71L62.30 129.69L65.00 126.71" stroke="#333" stroke-width="1.05" fill="none" stroke-linecap="round" stroke-linejoin="round"/>
<circle cx="75.3" cy="124.60" r="0.7" fill="#3a3a3a"/>
<circle cx="75.3" cy="127.20" r="0.7" fill="#3a3a3a"/>
<circle cx="75.3" cy="129.80" r="0.7" fill="#3a3a3a"/>
<path d="M86.2 123.4L93.6 130.4M93.6 123.4L86.2 130.4" stroke="#b9b9b9" stroke-width="0.8"/>
<path d="M99.8 127.6L102.6 130.4L109.4 123.6" stroke="#b9b9b9" stroke-width="0.8" fill="none"/>
<text x="115.6" y="129.9" font-size="8.8" font-style="italic" font-weight="700" fill="#3a3a3a" font-family="Liberation Serif, serif" textLength="8.6" lengthAdjust="spacingAndGlyphs">fx</text>
<path d="M127.60 125.86L130.40 128.94L133.20 125.86" stroke="#777" stroke-width="0.8" fill="none" stroke-linecap="round" stroke-linejoin="round"/>
<path d="M1009.30 124.81L1012.20 128.00L1015.10 124.81" stroke="#333" stroke-width="1" fill="none" stroke-linecap="round" stroke-linejoin="round"/>
</svg>

<div id="sheet" class="a">
<svg width="787" height="483" viewBox="0 140 787 483" style="left:0;top:0">
<rect x="0" y="140" width="773.2" height="15.4" fill="#f0f0f0"/>
<rect x="0" y="140" width="22" height="483" fill="#f0f0f0"/>
<path d="M22 171.00H773.2M22 186.60H773.2M22 202.20H773.2M22 217.80H773.2M22 233.40H773.2M22 249.00H773.2M22 264.60H773.2M22 280.20H773.2M22 295.80H773.2M22 311.40H773.2M22 327.00H773.2M22 342.60H773.2M22 358.20H773.2M22 373.80H773.2M22 389.40H773.2M22 405.00H773.2M22 420.60H773.2M22 436.20H773.2M22 451.80H773.2M22 467.40H773.2M22 483.00H773.2M22 498.60H773.2M22 514.20H773.2M22 529.80H773.2M22 545.40H773.2M22 561.00H773.2M22 576.60H773.2M22 592.20H773.2M22 607.80H773.2M66.71 155.4V623M111.52 155.4V623M156.33 155.4V623M201.14 155.4V623M245.95 155.4V623M290.76 155.4V623M335.57 155.4V623M380.38 155.4V623M425.19 155.4V623M470.00 155.4V623M514.81 155.4V623M559.62 155.4V623M604.43 155.4V623M649.24 155.4V623M694.05 155.4V623M738.86 155.4V623" stroke="#e9e9e9" stroke-width="1" fill="none"/>
<path d="M21.90 142V155M66.71 142V155M111.52 142V155M156.33 142V155M201.14 142V155M245.95 142V155M290.76 142V155M335.57 142V155M380.38 142V155M425.19 142V155M470.00 142V155M514.81 142V155M559.62 142V155M604.43 142V155M649.24 142V155M694.05 142V155M738.86 142V155" stroke="#dadada" stroke-width="1" fill="none"/>
<path d="M0 155.4H773.2" stroke="#c9c9c9" stroke-width="1" fill="none"/>
<path d="M22 155.4V623" stroke="#d0d0d0" stroke-width="1" fill="none"/>
<path d="M19.2 143.8V152.8H10.2Z" fill="#dadada"/>
<g font-size="8.2" fill="#383838" stroke="#383838" stroke-width="0.15" text-anchor="middle" font-family="Liberation Sans, sans-serif">
<text x="44.30" y="148.3">A</text>
<text x="89.12" y="148.3">B</text>
<text x="133.93" y="148.3">C</text>
<text x="178.74" y="148.3">D</text>
<text x="223.55" y="148.3">E</text>
<text x="268.36" y="148.3">F</text>
<text x="313.16" y="148.3">G</text>
<text x="357.98" y="148.3">H</text>
<text x="402.78" y="148.3">I</text>
<text x="447.60" y="148.3">J</text>
<text x="492.40" y="148.3">K</text>
<text x="537.22" y="148.3">L</text>
<text x="582.02" y="148.3">M</text>
<text x="626.84" y="148.3">N</text>
<text x="671.64" y="148.3">O</text>
<text x="716.46" y="148.3">P</text>
<text x="761.26" y="148.3">Q</text>
</g>
<g font-size="8" fill="#383838" stroke="#383838" stroke-width="0.15" text-anchor="middle" font-family="Liberation Sans, sans-serif">
<text x="10.9" y="166.10">1</text>
<text x="10.9" y="181.70">2</text>
<text x="10.9" y="197.30">3</text>
<text x="10.9" y="212.90">4</text>
<text x="10.9" y="228.50">5</text>
<text x="10.9" y="244.10">6</text>
<text x="10.9" y="259.70">7</text>
<text x="10.9" y="275.30">8</text>
<text x="10.9" y="290.90">9</text>
<text x="10.9" y="306.50">10</text>
<text x="10.9" y="322.10">11</text>
<text x="10.9" y="337.70">12</text>
<text x="10.9" y="353.30">13</text>
<text x="10.9" y="368.90">14</text>
<text x="10.9" y="384.50">15</text>
<text x="10.9" y="400.10">16</text>
<text x="10.9" y="415.70">17</text>
<text x="10.9" y="431.30">18</text>
<text x="10.9" y="446.90">19</text>
<text x="10.9" y="462.50">20</text>
<text x="10.9" y="478.10">21</text>
<text x="10.9" y="493.70">22</text>
<text x="10.9" y="509.30">23</text>
<text x="10.9" y="524.90">24</text>
<text x="10.9" y="540.50">25</text>
<text x="10.9" y="556.10">26</text>
<text x="10.9" y="571.70">27</text>
<text x="10.9" y="587.30">28</text>
<text x="10.9" y="602.90">29</text>
<text x="10.9" y="618.50">30</text>
</g>
<defs><filter id="cb" x="-5%" y="-5%" width="110%" height="110%"><feGaussianBlur stdDeviation="0.45"/></filter></defs>
<g filter="url(#cb)">
<path d="M140.90 215.10H530.60M140.90 259.80H530.60M140.90 304.50H530.60M140.90 349.20H530.60M140.90 393.90H530.60M140.90 438.60H530.60M158.27 214.50V452M175.20 214.50V452M192.12 214.50V452M209.06 214.50V452M225.99 214.50V452M242.92 214.50V452M259.85 214.50V452M276.77 214.50V452M293.71 214.50V452M310.63 214.50V452M327.56 214.50V452M344.50 214.50V452M361.43 214.50V452M378.36 214.50V452M395.28 214.50V452M412.22 214.50V452M429.14 214.50V452M446.07 214.50V452M463.00 214.50V452M479.94 214.50V452M496.87 214.50V452M513.80 214.50V452M530.73 214.50V452" stroke="#e4e4ef" stroke-width="1.3" fill="none"/>
<path d="M128 215.10H140.90M128 259.80H140.90M128 304.50H140.90M128 349.20H140.90M128 393.90H140.90M128 438.60H140.90" stroke="#e4e4ef" stroke-width="1.3" fill="none"/>
<path d="M144.00 438.60V231.84A5.80 5.34 0 0 1 155.60 231.84V438.60ZM160.93 438.60V243.14A5.80 5.34 0 0 1 172.53 243.14V438.60ZM177.86 438.60V246.24A5.80 5.34 0 0 1 189.46 246.24V438.60ZM194.79 438.60V247.84A5.80 5.34 0 0 1 206.39 247.84V438.60ZM211.72 438.60V247.84A5.80 5.34 0 0 1 223.32 247.84V438.60ZM228.65 438.60V260.14A5.80 5.34 0 0 1 240.25 260.14V438.60ZM245.58 438.60V269.24A5.80 5.34 0 0 1 257.18 269.24V438.60ZM262.51 438.60V269.44A5.80 5.34 0 0 1 274.11 269.44V438.60ZM279.44 438.60V277.64A5.80 5.34 0 0 1 291.04 277.64V438.60ZM296.37 438.60V280.64A5.80 5.34 0 0 1 307.97 280.64V438.60ZM313.30 438.60V281.14A5.80 5.34 0 0 1 324.90 281.14V438.60ZM330.23 438.60V287.14A5.80 5.34 0 0 1 341.83 287.14V438.60ZM347.16 438.60V289.04A5.80 5.34 0 0 1 358.76 289.04V438.60ZM364.09 438.60V298.94A5.80 5.34 0 0 1 375.69 298.94V438.60ZM381.02 438.60V300.34A5.80 5.34 0 0 1 392.62 300.34V438.60ZM397.95 438.60V303.84A5.80 5.34 0 0 1 409.55 303.84V438.60ZM414.88 438.60V320.24A5.80 5.34 0 0 1 426.48 320.24V438.60ZM431.81 438.60V327.04A5.80 5.34 0 0 1 443.41 327.04V438.60ZM448.74 438.60V327.04A5.80 5.34 0 0 1 460.34 327.04V438.60ZM465.67 438.60V327.04A5.80 5.34 0 0 1 477.27 327.04V438.60ZM482.60 438.60V332.54A5.80 5.34 0 0 1 494.20 332.54V438.60ZM499.53 438.60V336.24A5.80 5.34 0 0 1 511.13 336.24V438.60ZM516.46 438.60V392.64A5.80 5.34 0 0 1 528.06 392.64V438.60Z" fill="#637bee" stroke="#fff" stroke-opacity="0.55" stroke-width="2" paint-order="stroke"/>
<path d="M140.90 214.3V439.3" stroke="#111" stroke-width="1.8" fill="none"/>
<path d="M140.00 438.80H530.90" stroke="#111" stroke-width="1.9" fill="none"/>
<text x="283.2" y="192.2" text-anchor="middle" font-size="20.8" font-weight="700" fill="#2a2a2a" font-family="Noto Sans CJK JP, sans-serif">東京23区の人口密度（棒グラフ）</text>
<g font-size="19" fill="#3a3a3a" stroke="#3a3a3a" stroke-width="0.1" text-anchor="end" font-family="Noto Sans CJK JP, sans-serif">
<text x="122" y="223.20">25,000</text>
<text x="122" y="267.90">20,000</text>
<text x="122" y="312.60">15,000</text>
<text x="122" y="357.30">10,000</text>
<text x="122" y="402.00">5,000</text>
<text x="122" y="446.70">0</text>
</g>
<text transform="translate(46.2 417.7) rotate(-90)" text-anchor="start" font-size="19.3" fill="#3a3a3a" font-family="Noto Sans CJK JP, sans-serif">人口密度（人<tspan dx="0.6">/km</tspan><tspan font-size="12.5" dy="-7.4" dx="0.5">2</tspan><tspan dy="7.4" dx="7">）</tspan></text>
<text x="336" y="564" text-anchor="middle" font-size="18.6" fill="#444" font-family="Noto Sans CJK JP, sans-serif">X</text>
<g font-size="17.8" letter-spacing="1.6" fill="#262626" stroke="#262626" stroke-width="0.1" text-anchor="end" font-family="Noto Sans CJK JP, sans-serif">
<text transform="translate(153.40 470.30) scale(1 1.17) rotate(-45)">豊島区</text>
<text transform="translate(170.33 470.30) scale(1 1.17) rotate(-45)">中野区</text>
<text transform="translate(187.26 470.30) scale(1 1.17) rotate(-45)">荒川区</text>
<text transform="translate(204.19 470.30) scale(1 1.17) rotate(-45)">文京区</text>
<text transform="translate(221.12 470.30) scale(1 1.17) rotate(-45)">台東区</text>
<text transform="translate(238.05 470.30) scale(1 1.17) rotate(-45)">目黒区</text>
<text transform="translate(254.98 470.30) scale(1 1.17) rotate(-45)">墨田区</text>
<text transform="translate(271.91 470.30) scale(1 1.17) rotate(-45)">新宿区</text>
<text transform="translate(288.84 470.30) scale(1 1.17) rotate(-45)">板橋区</text>
<text transform="translate(305.77 470.30) scale(1 1.17) rotate(-45)">品川区</text>
<text transform="translate(322.70 470.30) scale(1 1.17) rotate(-45)">中央区</text>
<text transform="translate(339.63 470.30) scale(1 1.17) rotate(-45)">北区</text>
<text transform="translate(356.56 470.30) scale(1 1.17) rotate(-45)">杉並区</text>
<text transform="translate(373.49 470.30) scale(1 1.17) rotate(-45)">世田谷区</text>
<text transform="translate(390.42 470.30) scale(1 1.17) rotate(-45)">渋谷区</text>
<text transform="translate(407.35 470.30) scale(1 1.17) rotate(-45)">練馬区</text>
<text transform="translate(424.28 470.30) scale(1 1.17) rotate(-45)">江戸川区</text>
<text transform="translate(441.21 470.30) scale(1 1.17) rotate(-45)">港区</text>
<text transform="translate(458.14 470.30) scale(1 1.17) rotate(-45)">葛飾区</text>
<text transform="translate(475.07 470.30) scale(1 1.17) rotate(-45)">足立区</text>
<text transform="translate(492.00 470.30) scale(1 1.17) rotate(-45)">江東区</text>
<text transform="translate(508.93 470.30) scale(1 1.17) rotate(-45)">大田区</text>
<text transform="translate(525.86 470.30) scale(1 1.17) rotate(-45)">千代田区</text>
</g>
</g>
<path d="M545.30 154.30V574.30H21.30" fill="none" stroke="#5e5e5e" stroke-width="0.9"/>
<g fill="#fff" stroke="#444" stroke-width="1">
<circle cx="21.30" cy="154.30" r="2.9"/>
<circle cx="283.30" cy="154.30" r="2.9"/>
<circle cx="545.30" cy="154.30" r="2.9"/>
<circle cx="21.30" cy="364.30" r="2.9"/>
<circle cx="545.30" cy="364.30" r="2.9"/>
<circle cx="21.30" cy="574.30" r="2.9"/>
<circle cx="283.30" cy="574.30" r="2.9"/>
<circle cx="545.30" cy="574.30" r="2.9"/>
</g>
<rect x="0" y="140" width="773.2" height="15" fill="#f0f0f0"/>
<rect x="0" y="156" width="21.5" height="467" fill="#f0f0f0"/>
<path d="M21.90 142V155M66.71 142V155M111.52 142V155M156.33 142V155M201.14 142V155M245.95 142V155M290.76 142V155M335.57 142V155M380.38 142V155M425.19 142V155M470.00 142V155M514.81 142V155M559.62 142V155M604.43 142V155M649.24 142V155M694.05 142V155M738.86 142V155" stroke="#dadada" stroke-width="1" fill="none"/>
<path d="M19.2 143.8V152.8H10.2Z" fill="#dadada"/>
<g font-size="8.2" fill="#383838" stroke="#383838" stroke-width="0.15" text-anchor="middle" font-family="Liberation Sans, sans-serif">
<text x="44.30" y="148.3">A</text>
<text x="89.12" y="148.3">B</text>
<text x="133.93" y="148.3">C</text>
<text x="178.74" y="148.3">D</text>
<text x="223.55" y="148.3">E</text>
<text x="268.36" y="148.3">F</text>
<text x="313.16" y="148.3">G</text>
<text x="357.98" y="148.3">H</text>
<text x="402.78" y="148.3">I</text>
<text x="447.60" y="148.3">J</text>
<text x="492.40" y="148.3">K</text>
<text x="537.22" y="148.3">L</text>
<text x="582.02" y="148.3">M</text>
<text x="626.84" y="148.3">N</text>
<text x="671.64" y="148.3">O</text>
<text x="716.46" y="148.3">P</text>
<text x="761.26" y="148.3">Q</text>
</g>
<g font-size="8" fill="#383838" stroke="#383838" stroke-width="0.15" text-anchor="middle" font-family="Liberation Sans, sans-serif">
<text x="10.9" y="166.10">1</text>
<text x="10.9" y="181.70">2</text>
<text x="10.9" y="197.30">3</text>
<text x="10.9" y="212.90">4</text>
<text x="10.9" y="228.50">5</text>
<text x="10.9" y="244.10">6</text>
<text x="10.9" y="259.70">7</text>
<text x="10.9" y="275.30">8</text>
<text x="10.9" y="290.90">9</text>
<text x="10.9" y="306.50">10</text>
<text x="10.9" y="322.10">11</text>
<text x="10.9" y="337.70">12</text>
<text x="10.9" y="353.30">13</text>
<text x="10.9" y="368.90">14</text>
<text x="10.9" y="384.50">15</text>
<text x="10.9" y="400.10">16</text>
<text x="10.9" y="415.70">17</text>
<text x="10.9" y="431.30">18</text>
<text x="10.9" y="446.90">19</text>
<text x="10.9" y="462.50">20</text>
<text x="10.9" y="478.10">21</text>
<text x="10.9" y="493.70">22</text>
<text x="10.9" y="509.30">23</text>
<text x="10.9" y="524.90">24</text>
<text x="10.9" y="540.50">25</text>
<text x="10.9" y="556.10">26</text>
<text x="10.9" y="571.70">27</text>
<text x="10.9" y="587.30">28</text>
<text x="10.9" y="602.90">29</text>
<text x="10.9" y="618.50">30</text>
</g>
<rect x="0" y="139.5" width="787" height="1.2" fill="#eaedf1"/>
<rect x="553.3" y="155.7" width="16.4" height="16" rx="3" fill="#fff" stroke="#7a7a7a" stroke-width="0.9"/>
<rect x="556.6" y="159.6" width="10" height="8.4" fill="#f4f4f4" stroke="#8a8a8a" stroke-width="0.8"/>
<path d="M558.3 159.6V168M564.9 159.6V168M556.6 161.2H566.6M556.6 166.4H566.6" stroke="#9a9a9a" stroke-width="0.5"/>
<rect x="558.6" y="161.5" width="6" height="4.6" fill="#cfe3f7"/>
<path d="M558.6 165L560.4 162.8L562 164.2L563 163.4L564.6 165V166.1H558.6Z" fill="#1f5fae"/>
<rect x="773.4" y="140.7" width="14" height="482.7" fill="#eaedf1"/>
<rect x="774.8" y="141.2" width="10.9" height="482" rx="5.4" fill="#f4f5f7"/>
<rect x="777.5" y="152" width="5.4" height="458.6" rx="2.7" fill="#6b6b6b"/>
<path d="M777.5 148.4L780.2 144.2L782.9 148.4Z" fill="#555"/>
<path d="M777.5 616.2L780.2 620.4L782.9 616.2Z" fill="#555"/>
</svg>

</div>
<div id="panel" class="a"></div>
<div id="tabsbar" class="a"></div>
<div id="status" class="a"></div>
<svg width="237" height="500" viewBox="787 140 237 500" style="left:787px;top:140px" font-family="Liberation Sans, Noto Sans CJK JP, sans-serif">
<path d="M815 164.2H824.4M815 167H822.6M815 169.8H820.6" stroke="#555" stroke-width="0.85" stroke-linecap="round"/>
<path d="M839.9 162.4C841.4 163.6 842.8 164 844.5 164.1V167.4C844.5 169.8 842.4 171.4 839.9 172.2C837.4 171.4 835.3 169.8 835.3 167.4V164.1C837 164 838.4 163.6 839.9 162.4Z" fill="none" stroke="#2a8a4a" stroke-width="0.85" stroke-linejoin="round"/>
<path d="M837.9 167.3L839.3 168.7L842 165.9" stroke="#2a8a4a" stroke-width="0.85" fill="none" stroke-linecap="round" stroke-linejoin="round"/>
<rect x="875.6" y="157.1" width="39.2" height="19.6" rx="5" fill="#ebebeb" stroke="#dcdcdc" stroke-width="0.8"/>
<path d="M895.6 157.5H880.6Q876 157.5 876 162.1V171.7Q876 176.3 880.6 176.3H895.6Z" fill="#fff"/>
<path d="M895.6 157.3V176.5" stroke="#dcdcdc" stroke-width="0.7"/>
<rect x="880.9" y="164.2" width="9.8" height="6.8" rx="1.2" fill="#107c41"/>
<path d="M883.9 164.2V163.2Q883.9 162.4 884.7 162.4H886.9Q887.7 162.4 887.7 163.2V164.2" stroke="#107c41" stroke-width="0.9" fill="none"/>
<path d="M880.9 167.3H890.7" stroke="#fff" stroke-width="0.7"/><rect x="885" y="166.5" width="1.6" height="1.8" fill="#fff"/>
<circle cx="905" cy="166.9" r="4.4" fill="none" stroke="#555" stroke-width="0.75"/>
<ellipse cx="905" cy="166.9" rx="1.9" ry="4.4" fill="none" stroke="#555" stroke-width="0.7"/>
<path d="M900.9 165.4H909.1M900.9 168.4H909.1" stroke="#555" stroke-width="0.65"/>
<rect x="940.4" y="158.1" width="17.6" height="17.6" rx="4.2" fill="#107c41"/>
<path d="M950.2 163.1H947.4Q945.8 163.1 945.8 164.7V169.1Q945.8 170.7 947.4 170.7H951.6Q953.2 170.7 953.2 169.1V166.6" stroke="#fff" stroke-width="0.85" fill="none" stroke-linecap="round"/>
<path d="M948.8 167.8L949.2 166.2L953 162.4L954.2 163.6L950.4 167.4Z" fill="none" stroke="#fff" stroke-width="0.75" stroke-linejoin="round"/>
<circle cx="970.00" cy="166.9" r="0.85" fill="#3a3a3a"/>
<circle cx="973.10" cy="166.9" r="0.85" fill="#3a3a3a"/>
<circle cx="976.20" cy="166.9" r="0.85" fill="#3a3a3a"/>
<path d="M994.4 163.3L1001.6 170.6M1001.6 163.3L994.4 170.6" stroke="#444" stroke-width="0.85" stroke-linecap="round"/>
<text x="817.10" y="198.72" font-size="10.6" fill="#242424" font-weight="700" stroke="#242424" stroke-width="0.12" textLength="42.00" lengthAdjust="spacingAndGlyphs">見どころ</text>
<circle cx="824.6" cy="212.20" r="1.05" fill="#2a2a2a"/>
<text x="831.30" y="215.03" font-size="8.7" fill="#242424" font-weight="700" stroke="#242424" stroke-width="0.12" textLength="95.90" lengthAdjust="spacingAndGlyphs">豊島区・中野区・文京区</text>
<text x="927.20" y="215.03" font-size="8.7" fill="#424242" stroke="#424242" stroke-width="0.12" textLength="52.20" lengthAdjust="spacingAndGlyphs">などは、面積</text>
<text x="831.30" y="227.43" font-size="8.7" fill="#424242" stroke="#424242" stroke-width="0.12" textLength="138.90" lengthAdjust="spacingAndGlyphs">が小さいため人口密度が非常に高い</text>
<circle cx="824.6" cy="237.30" r="1.05" fill="#2a2a2a"/>
<text x="831.30" y="240.13" font-size="8.7" fill="#242424" font-weight="700" stroke="#242424" stroke-width="0.12" textLength="95.90" lengthAdjust="spacingAndGlyphs">大田区・江東区・足立区</text>
<text x="927.20" y="240.13" font-size="8.7" fill="#424242" stroke="#424242" stroke-width="0.12" textLength="52.20" lengthAdjust="spacingAndGlyphs">などは、面積</text>
<text x="831.30" y="252.63" font-size="8.7" fill="#424242" stroke="#424242" stroke-width="0.12" textLength="146.30" lengthAdjust="spacingAndGlyphs">が広く人口が多くても密度は相対的に</text>
<text x="831.30" y="264.93" font-size="8.7" fill="#424242" stroke="#424242" stroke-width="0.12" textLength="16.40" lengthAdjust="spacingAndGlyphs">低い</text>
<circle cx="824.6" cy="274.70" r="1.05" fill="#2a2a2a"/>
<text x="831.30" y="277.53" font-size="8.7" fill="#242424" font-weight="700" stroke="#242424" stroke-width="0.12" textLength="34.90" lengthAdjust="spacingAndGlyphs">千代田区</text>
<text x="866.20" y="277.53" font-size="8.7" fill="#424242" stroke="#424242" stroke-width="0.12" textLength="112.10" lengthAdjust="spacingAndGlyphs">は居住人口が少なく、突出し</text>
<text x="831.30" y="290.03" font-size="8.7" fill="#424242" stroke="#424242" stroke-width="0.12" textLength="33.90" lengthAdjust="spacingAndGlyphs">て低密度</text>
<text x="817.10" y="305.83" font-size="8.7" fill="#424242" stroke="#424242" stroke-width="0.12" textLength="15.70" lengthAdjust="spacingAndGlyphs">もし</text>
<circle cx="824.6" cy="320.30" r="1.05" fill="#2a2a2a"/>
<text x="831.30" y="323.03" font-size="8.7" fill="#242424" font-weight="700" stroke="#242424" stroke-width="0.12" textLength="94.50" lengthAdjust="spacingAndGlyphs">人口そのものの棒グラフ</text>
<circle cx="824.6" cy="332.70" r="1.05" fill="#2a2a2a"/>
<text x="831.30" y="335.43" font-size="8.7" fill="#242424" font-weight="700" stroke="#242424" stroke-width="0.12" textLength="59.50" lengthAdjust="spacingAndGlyphs">面積の棒グラフ</text>
<circle cx="824.6" cy="345.30" r="1.05" fill="#2a2a2a"/>
<text x="831.50" y="348.40" font-size="9.3" fill="#333" stroke="#333" stroke-width="0.12" textLength="19.50" lengthAdjust="spacingAndGlyphs">Excel</text>
<text x="851.00" y="348.13" font-size="8.7" fill="#242424" font-weight="700" stroke="#242424" stroke-width="0.12" textLength="129.50" lengthAdjust="spacingAndGlyphs">に貼り付けられるデータ／グラフ</text>
<circle cx="824.6" cy="357.70" r="1.05" fill="#2a2a2a"/>
<text x="831.30" y="360.43" font-size="8.7" fill="#242424" font-weight="700" stroke="#242424" stroke-width="0.12" textLength="112.00" lengthAdjust="spacingAndGlyphs">区を城東・城西などで色分け</text>
<text x="817.10" y="377.03" font-size="8.7" fill="#424242" stroke="#424242" stroke-width="0.12" textLength="154.60" lengthAdjust="spacingAndGlyphs">などに変えたい場合も、すぐ作り直しま</text>
<text x="817.10" y="389.23" font-size="8.7" fill="#424242" stroke="#424242" stroke-width="0.12" textLength="83.50" lengthAdjust="spacingAndGlyphs">す。どれにしますか？</text>
<rect x="819" y="418.6" width="8.6" height="8.6" rx="1.8" stroke="#444" stroke-width="0.8" fill="none" stroke-linejoin="round" stroke-linecap="round"/>
<path d="M821.2 422.9H825.4M823.3 420.8V425" stroke="#444" stroke-width="0.8" fill="none" stroke-linejoin="round" stroke-linecap="round"/>
<rect x="841.4" y="418.4" width="6" height="7.8" rx="1.2" stroke="#444" stroke-width="0.8" fill="none" stroke-linejoin="round" stroke-linecap="round"/>
<path d="M839.6 420V426.4Q839.6 427.6 840.8 427.6H845" stroke="#444" stroke-width="0.8" fill="none" stroke-linejoin="round" stroke-linecap="round"/>
<path d="M861.4 422.2L863.6 418.4C864.8 418.2 865.4 419.2 865 420.4L864.6 422H867Q868.2 422.2 868 423.4L867.2 426.2Q866.8 427.2 865.8 427.2H861.6Q859.4 427.2 859 425.2L858.8 423.8Q858.8 422.4 860.2 422.2Z" stroke="#444" stroke-width="0.8" fill="none" stroke-linejoin="round" stroke-linecap="round"/>
<path d="M885.2 423.2L883 427C881.8 427.2 881.2 426.2 881.6 425L882 423.4H879.6Q878.4 423.2 878.6 422L879.4 419.2Q879.8 418.2 880.8 418.2H885Q887.2 418.2 887.6 420.2L887.8 421.6Q887.8 423 886.4 423.2Z" stroke="#444" stroke-width="0.8" fill="none" stroke-linejoin="round" stroke-linecap="round"/>
<path d="M902.6 419.4H900.2Q898.4 419.4 898.4 421.2V425.6Q898.4 427.4 900.2 427.4H905Q906.8 427.4 906.8 425.6V425" stroke="#444" stroke-width="0.8" fill="none" stroke-linejoin="round" stroke-linecap="round"/>
<path d="M901 424.6C901.4 422.2 903 421.2 905 421.2V419L908.6 422L905 425V423C903.4 423 902 423.4 901 424.6Z" stroke="#444" stroke-width="0.8" fill="none" stroke-linejoin="round" stroke-linecap="round"/>
<circle cx="919.60" cy="422.5" r="0.8" fill="#3a3a3a"/>
<circle cx="922.75" cy="422.5" r="0.8" fill="#3a3a3a"/>
<circle cx="925.90" cy="422.5" r="0.8" fill="#3a3a3a"/>
<rect x="819.40" y="458.00" width="162.10" height="31.90" rx="5.5" fill="#fbfbfb" stroke="#e4e4e4" stroke-width="0.8"/>
<text x="827.30" y="471.13" font-size="8.7" fill="#333" stroke="#333" stroke-width="0.12" textLength="138.50" lengthAdjust="spacingAndGlyphs">人口そのものの棒グラフを作成して</text>
<text x="827.30" y="483.63" font-size="8.7" fill="#333" stroke="#333" stroke-width="0.12" textLength="35.00" lengthAdjust="spacingAndGlyphs">ください</text>
<rect x="839.30" y="495.20" width="142.20" height="32.10" rx="5.5" fill="#fbfbfb" stroke="#e4e4e4" stroke-width="0.8"/>
<text x="847.40" y="508.53" font-size="8.7" fill="#333" stroke="#333" stroke-width="0.12" textLength="121.00" lengthAdjust="spacingAndGlyphs">面積の棒グラフを作成してくだ</text>
<text x="847.40" y="521.03" font-size="8.7" fill="#333" stroke="#333" stroke-width="0.12" textLength="17.10" lengthAdjust="spacingAndGlyphs">さい</text>
<rect x="819.40" y="532.50" width="162.10" height="33.50" rx="5.5" fill="#fbfbfb" stroke="#e4e4e4" stroke-width="0.8"/>
<text x="827.30" y="545.63" font-size="8.7" fill="#333" stroke="#333" stroke-width="0.12" textLength="138.80" lengthAdjust="spacingAndGlyphs">区を城東・城西で色分けしてくださ</text>
<text x="827.30" y="557.73" font-size="8.7" fill="#333" stroke="#333" stroke-width="0.12" textLength="8.70" lengthAdjust="spacingAndGlyphs">い</text>
<rect x="815.5" y="559.4" width="179" height="51" rx="9" fill="#000" opacity="0.05"/>
<rect x="815" y="558.9" width="180" height="51.4" rx="9.4" fill="#000" opacity="0.04"/>
<rect x="815.5" y="558.5" width="179" height="50.9" rx="9" fill="#fff" stroke="#ececec" stroke-width="0.6"/>
<text x="825.90" y="574.55" font-size="8.6" fill="#616161" stroke="#616161" stroke-width="0.12" textLength="26.60" lengthAdjust="spacingAndGlyphs">Copilot</text>
<text x="855.80" y="574.63" font-size="8.7" fill="#616161" stroke="#616161" stroke-width="0.12" textLength="78.40" lengthAdjust="spacingAndGlyphs">へメッセージを送る</text>
<path d="M828 594.7H836.2M832.1 590.6V598.8" stroke="#444" stroke-width="0.85" stroke-linecap="round"/>
<path d="M851.6 592.4H859.8M851.6 597H859.8" stroke="#444" stroke-width="0.85" stroke-linecap="round"/>
<circle cx="857.6" cy="592.4" r="1.3" fill="#fff" stroke="#444" stroke-width="0.8"/>
<circle cx="853.8" cy="597" r="1.3" fill="#fff" stroke="#444" stroke-width="0.8"/>
<rect x="978.6" y="589.8" width="3.4" height="6.4" rx="1.7" fill="#fff" stroke="#444" stroke-width="0.8"/>
<path d="M977 594.4C977 598.6 983.6 598.6 983.6 594.4M980.3 597.6V599.4" stroke="#444" stroke-width="0.8" fill="none" stroke-linecap="round"/>
<text x="803.70" y="625.03" font-size="7.3" fill="#616161" stroke="#616161" stroke-width="0.12" textLength="197.80" lengthAdjust="spacingAndGlyphs">AI で生成されたコンテンツは誤りを含む可能性があります。</text>
</svg>

<svg width="787" height="18" viewBox="0 622 787 18" style="left:0px;top:622px" font-family="Liberation Sans, Noto Sans CJK JP, sans-serif">
<path d="M21.9 628.5L18.7 631.5L21.9 634.5" stroke="#8c8c8c" stroke-width="0.95" fill="none" stroke-linecap="round" stroke-linejoin="round"/>
<path d="M39.2 628.5L42.4 631.5L39.2 634.5" stroke="#8c8c8c" stroke-width="0.95" fill="none" stroke-linecap="round" stroke-linejoin="round"/>
<path d="M164.4 622H213.6Q211.4 622.2 211.4 624.4V636Q211.4 638.5 208.9 638.5H171.3Q168.8 638.5 168.8 636V624.4Q168.8 622.2 166.6 622Z" fill="#fff"/>
<path d="M174.2 636.4H205.9" stroke="#1e7145" stroke-width="1.3"/>
<text x="79.00" y="634.95" font-size="8.6" fill="#333" stroke="#333" stroke-width="0.15" textLength="28.30" lengthAdjust="spacingAndGlyphs">Sheet1</text>
<text x="126.40" y="634.95" font-size="8.6" fill="#333" stroke="#333" stroke-width="0.15" textLength="29.60" lengthAdjust="spacingAndGlyphs">Sheet2</text>
<text x="174.80" y="633.35" font-size="8.6" fill="#3a3a3a" stroke="#3a3a3a" stroke-width="0.15" textLength="29.60" lengthAdjust="spacingAndGlyphs">Sheet3</text>
<path d="M118 626.5V636.5M165.9 626.5V636.5M214 626.5V636.5" stroke="#c6c6c6" stroke-width="0.9"/>
<path d="M240.4 631.2H247M243.7 627.9V634.5" stroke="#444" stroke-width="0.9"/>
<rect x="484" y="626.5" width="290.4" height="9.6" rx="4.8" fill="#f4f5f7"/>
<circle cx="473.4" cy="628.60" r="0.6" fill="#555"/>
<circle cx="473.4" cy="631.20" r="0.6" fill="#555"/>
<circle cx="473.4" cy="633.80" r="0.6" fill="#555"/>
<path d="M491.3 628.8L487.1 631.3L491.3 633.8Z" fill="#555"/>
<path d="M767.7 628.8L771.9 631.3L767.7 633.8Z" fill="#555"/>
<rect x="495" y="628.6" width="264.6" height="5.4" rx="2.7" fill="#6b6b6b"/>
</svg>

<svg width="1024" height="16" viewBox="0 640 1024 16" style="left:0px;top:640px" font-family="Liberation Sans, Noto Sans CJK JP, sans-serif">
<text x="7.60" y="650.96" font-size="7.4" fill="#333" stroke="#333" stroke-width="0.18" textLength="29.20" lengthAdjust="spacingAndGlyphs">準備完了</text>
<circle cx="54" cy="645.3" r="1.1" fill="none" stroke="#333" stroke-width="0.85"/>
<path d="M50.6 647.6L54 648.2L57.4 647.6M54 648.2V650M54 650L51.8 653M54 650L56.2 653" stroke="#333" stroke-width="0.9" fill="none" stroke-linecap="round" stroke-linejoin="round"/>
<path d="M55.6 650.4L58 652.8M58 650.4L55.6 652.8" stroke="#333" stroke-width="0.7"/>
<text x="60.40" y="650.96" font-size="7.4" fill="#333" stroke="#333" stroke-width="0.18" textLength="101.60" lengthAdjust="spacingAndGlyphs">アクセシビリティ: 検討が必要です</text>
<rect x="826.3" y="641.8" width="24.5" height="12.6" fill="#d6d8da"/>
<rect x="834.2" y="644.2" width="8.4" height="8" fill="none" stroke="#333" stroke-width="0.8"/>
<path d="M837 644.2V652.2M839.8 644.2V652.2M834.2 646.9H842.6M834.2 649.5H842.6" stroke="#333" stroke-width="0.7"/>
<rect x="859.2" y="644.2" width="8" height="8" fill="none" stroke="#333" stroke-width="0.8"/>
<rect x="861.2" y="646" width="4" height="4.6" fill="none" stroke="#333" stroke-width="0.7"/>
<rect x="884.4" y="644.2" width="8.4" height="8" fill="none" stroke="#333" stroke-width="0.8"/>
<path d="M887 644.2V648H892.8" stroke="#333" stroke-width="0.7" fill="none"/>
<path d="M904.6 648H908.3" stroke="#333" stroke-width="0.8"/>
<path d="M912.7 648H973.9" stroke="#6a6a6a" stroke-width="0.7"/>
<rect x="942.9" y="645.1" width="2.6" height="6.6" rx="0.6" fill="#333"/>
<path d="M978.3 648H982M980.15 646.15V649.85" stroke="#333" stroke-width="0.8"/>
<text x="992.10" y="650.97" font-size="7.8" fill="#333" stroke="#333" stroke-width="0.18" textLength="19.00" lengthAdjust="spacingAndGlyphs">100%</text>
</svg>

</div>
<div id="winb"></div>
</body></html>
